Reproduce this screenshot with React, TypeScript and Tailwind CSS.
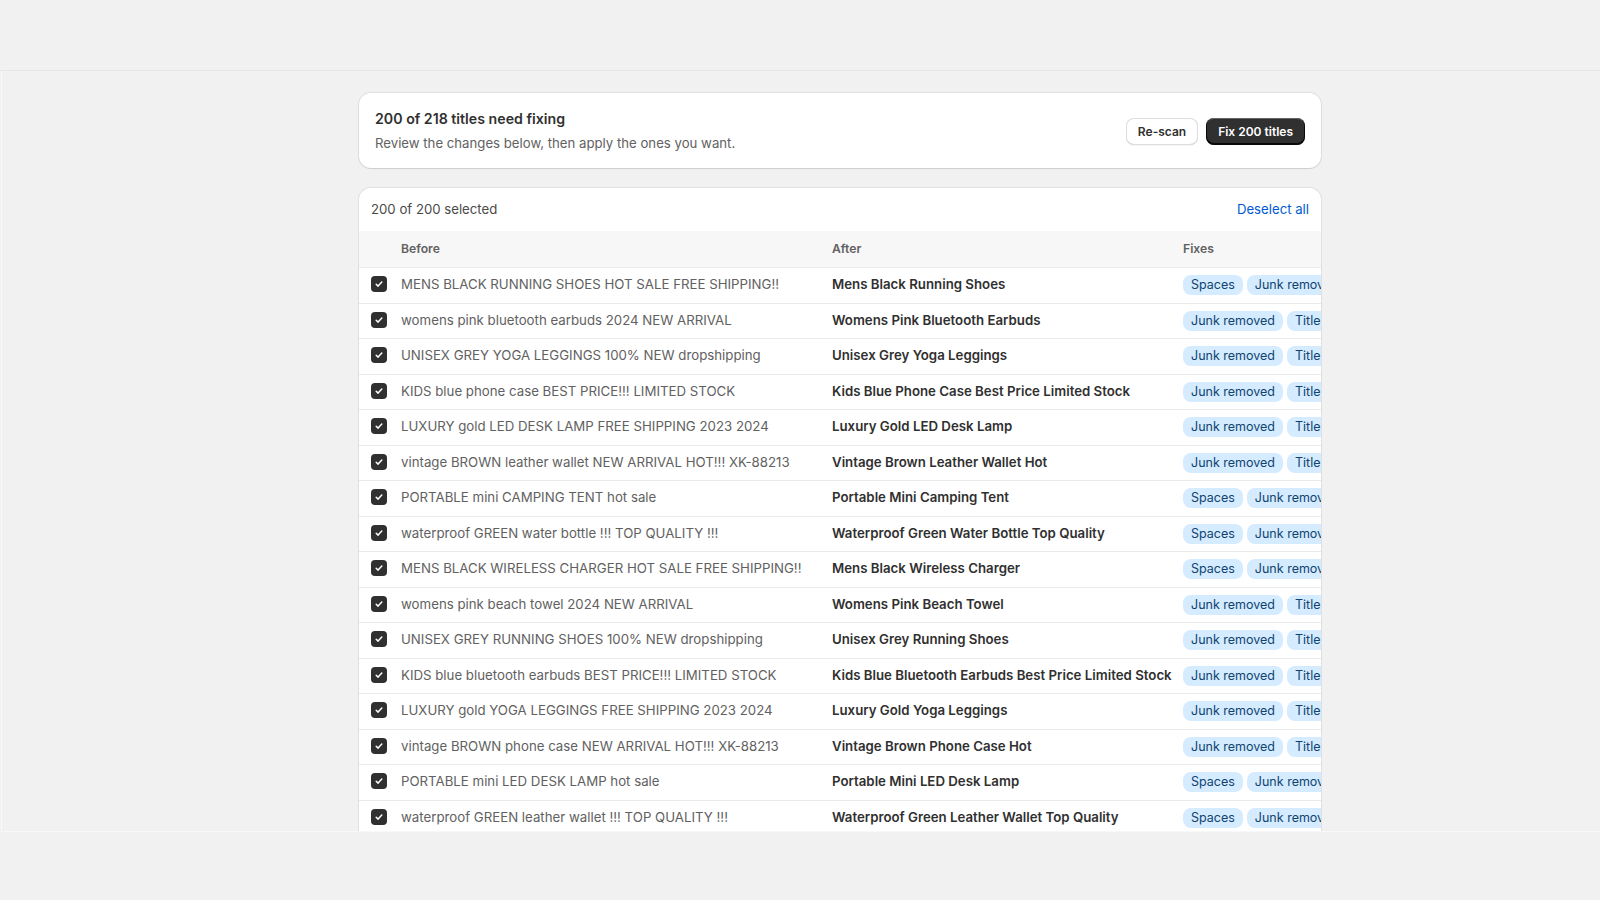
import React from "react";

type Row = {
  before: string;
  after: string;
  fixes: string[];
};

const rows: Row[] = [
  { before: "MENS BLACK RUNNING SHOES HOT SALE FREE SHIPPING!!", after: "Mens Black Running Shoes", fixes: ["Spaces", "Junk removed", "Title case"] },
  { before: "womens pink bluetooth earbuds 2024 NEW ARRIVAL", after: "Womens Pink Bluetooth Earbuds", fixes: ["Junk removed", "Title case"] },
  { before: "UNISEX GREY YOGA LEGGINGS 100% NEW dropshipping", after: "Unisex Grey Yoga Leggings", fixes: ["Junk removed", "Title case"] },
  { before: "KIDS blue phone case BEST PRICE!!! LIMITED STOCK", after: "Kids Blue Phone Case Best Price Limited Stock", fixes: ["Junk removed", "Title case"] },
  { before: "LUXURY gold LED DESK LAMP FREE SHIPPING 2023 2024", after: "Luxury Gold LED Desk Lamp", fixes: ["Junk removed", "Title case"] },
  { before: "vintage BROWN leather wallet NEW ARRIVAL HOT!!! XK-88213", after: "Vintage Brown Leather Wallet Hot", fixes: ["Junk removed", "Title case"] },
  { before: "PORTABLE mini CAMPING TENT hot sale", after: "Portable Mini Camping Tent", fixes: ["Spaces", "Junk removed", "Title case"] },
  { before: "waterproof GREEN water bottle !!! TOP QUALITY !!!", after: "Waterproof Green Water Bottle Top Quality", fixes: ["Spaces", "Junk removed", "Title case"] },
  { before: "MENS BLACK WIRELESS CHARGER HOT SALE FREE SHIPPING!!", after: "Mens Black Wireless Charger", fixes: ["Spaces", "Junk removed", "Title case"] },
  { before: "womens pink beach towel 2024 NEW ARRIVAL", after: "Womens Pink Beach Towel", fixes: ["Junk removed", "Title case"] },
  { before: "UNISEX GREY RUNNING SHOES 100% NEW dropshipping", after: "Unisex Grey Running Shoes", fixes: ["Junk removed", "Title case"] },
  { before: "KIDS blue bluetooth earbuds BEST PRICE!!! LIMITED STOCK", after: "Kids Blue Bluetooth Earbuds Best Price Limited Stock", fixes: ["Junk removed", "Title case"] },
  { before: "LUXURY gold YOGA LEGGINGS FREE SHIPPING 2023 2024", after: "Luxury Gold Yoga Leggings", fixes: ["Junk removed", "Title case"] },
  { before: "vintage BROWN phone case NEW ARRIVAL HOT!!! XK-88213", after: "Vintage Brown Phone Case Hot", fixes: ["Junk removed", "Title case"] },
  { before: "PORTABLE mini LED DESK LAMP hot sale", after: "Portable Mini LED Desk Lamp", fixes: ["Spaces", "Junk removed", "Title case"] },
  { before: "waterproof GREEN leather wallet !!! TOP QUALITY !!!", after: "Waterproof Green Leather Wallet Top Quality", fixes: ["Spaces", "Junk removed", "Title case"] },
];

const Checkbox = () => (
  <span className="-mt-[2px] flex h-4 w-4 items-center justify-center rounded-[4px] bg-[#303030]">
    <svg width="10" height="10" viewBox="0 0 10 10" fill="none">
      <path d="M2.2 5.2l1.9 1.9 3.7-4" stroke="#fff" strokeWidth="1.5" strokeLinecap="round" strokeLinejoin="round" />
    </svg>
  </span>
);

const Tag = ({ label }: { label: string }) => (
  <span className="flex h-5 shrink-0 items-center rounded-lg bg-[#d5ebff] px-2 text-[12.5px] leading-5 text-[#0f4470]">{label}</span>
);

const App = () => {
  return (
    <div className="h-[900px] w-[1600px] overflow-hidden bg-[#f1f1f1] font-['Inter','Liberation_Sans',sans-serif] text-[#303030]">
      {/* top bar */}
      <div className="h-[71px] border-b border-[#e6e6e6]" />

      {/* frame */}
      <div className="ml-px h-[761px] overflow-hidden border-b border-l border-[#f8f8f8]">
        <div className="ml-[357px] flex w-[962px] flex-col gap-[20px] pt-[22px]">
          {/* summary card */}
          <div className="flex h-[75px] items-center justify-between rounded-xl bg-white pl-4 pr-4 shadow-[0_0_0_1px_rgba(0,0,0,0.07),0_1px_1px_rgba(0,0,0,0.08)]">
            <div className="flex flex-col gap-1">
              <div className="text-[14.2px] font-semibold leading-5 text-[#303030]">200 of 218 titles need fixing</div>
              <div className="text-[13.2px] leading-5 text-[#616161]">Review the changes below, then apply the ones you want.</div>
            </div>
            <div className="mt-[2px] flex items-center gap-2">
              <button className="h-[27px] rounded-lg bg-white px-3 text-[12px] font-semibold text-[#303030] shadow-[inset_0_0_0_1px_#dedede,inset_0_-1px_0_#cccccc,0_1px_0_rgba(0,0,0,0.05)]">
                Re-scan
              </button>
              <button className="h-[27px] rounded-lg bg-[#303030] px-3 text-[12px] font-semibold text-white shadow-[inset_0_-1px_0_1px_rgba(0,0,0,0.8),inset_0_1px_0_rgba(255,255,255,0.25)]">
                Fix 200 titles
              </button>
            </div>
          </div>

          {/* table card */}
          <div className="overflow-hidden rounded-t-xl bg-white shadow-[0_0_0_1px_rgba(0,0,0,0.07)]">
            <div className="flex h-[43px] items-center justify-between px-3 text-[13.2px]">
              <span className="text-[#4a4a4a]">200 of 200 selected</span>
              <span className="text-[#005bd3]">Deselect all</span>
            </div>

            <div className="flex h-[37px] items-center border-b border-[#ebebeb] bg-[#f7f7f7] text-[12.2px] font-semibold text-[#616161]">
              <div className="w-[42px] shrink-0" />
              <div className="w-[431px] shrink-0">Before</div>
              <div className="w-[351px] shrink-0">After</div>
              <div className="shrink-0">Fixes</div>
            </div>

            {rows.map((row, i) => (
              <div key={i} className="flex h-[35.5px] items-center border-b border-[#ebebeb] text-[13.25px]">
                <div className="flex w-[42px] shrink-0 pl-3">
                  <Checkbox />
                </div>
                <div className="w-[431px] shrink-0 whitespace-nowrap text-[#616161]">{row.before}</div>
                <div className="w-[351px] shrink-0 whitespace-nowrap font-semibold text-[#303030]">{row.after}</div>
                <div className="flex shrink-0 gap-1">
                  {row.fixes.map((f) => (
                    <Tag key={f} label={f} />
                  ))}
                </div>
              </div>
            ))}
          </div>
        </div>
      </div>
    </div>
  );
};

export default App;
